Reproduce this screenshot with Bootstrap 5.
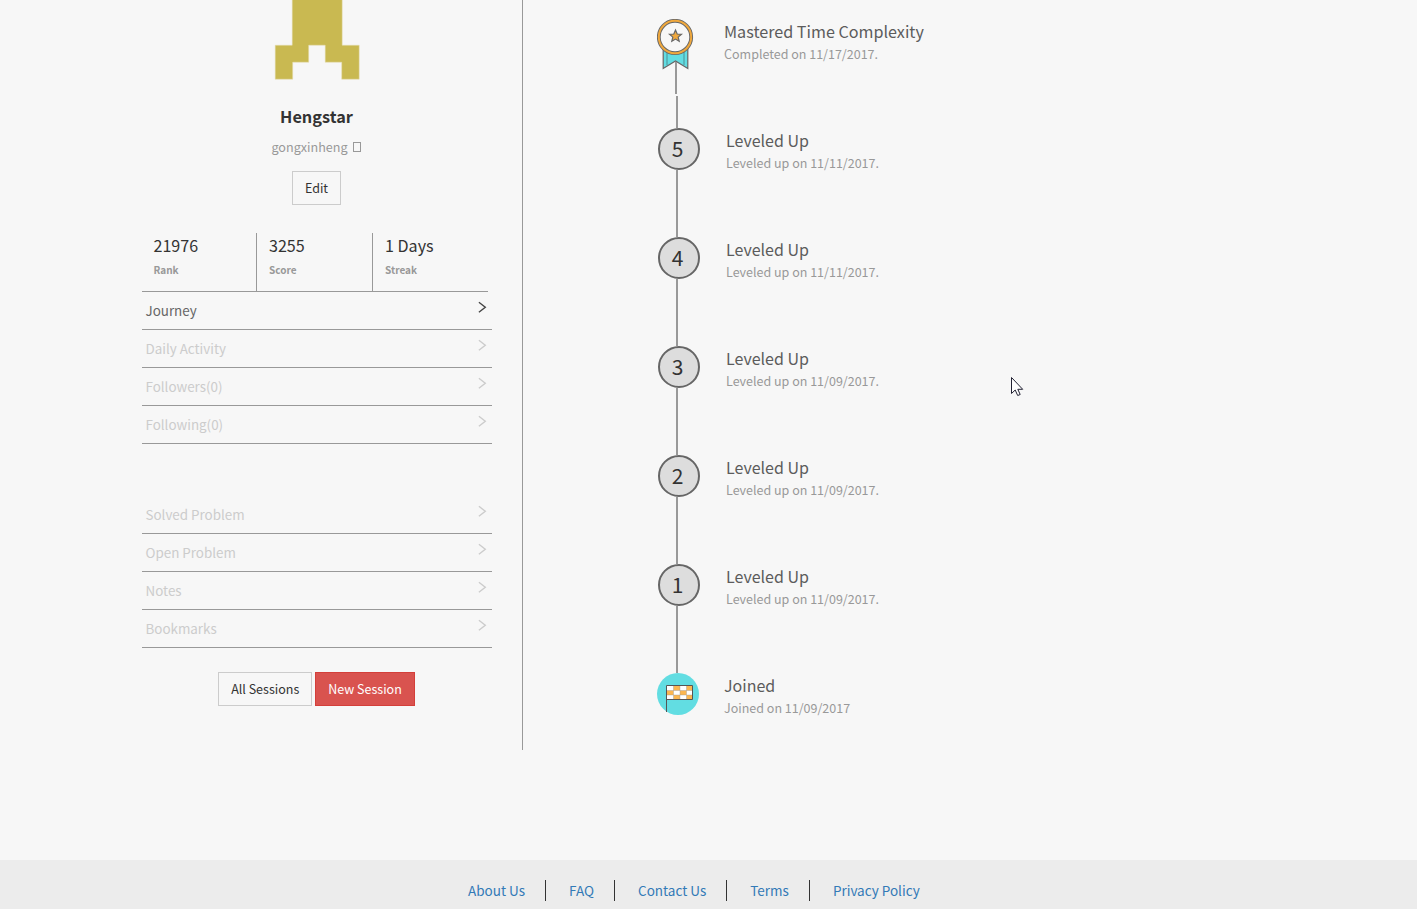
<!DOCTYPE html>
<html lang="en">
<head>
<meta charset="utf-8">
<title>Profile</title>
<link href="https://cdn.jsdelivr.net/npm/bootstrap@5.3.0/dist/css/bootstrap.min.css" rel="stylesheet">
<script src="https://cdn.jsdelivr.net/npm/bootstrap@5.3.0/dist/js/bootstrap.bundle.min.js"></script>
<style>
body{background:#f7f7f7;color:#333;font:14px/20px "Noto Sans CJK SC",sans-serif;height:909px;overflow:hidden}
a{text-decoration:none}
.profile{width:523px;height:750px;padding-left:142px;border-right:1px solid #999}
.profile-in{width:350px}
.avatar{display:block;margin:0 auto}
.user-name{font-size:16.3px;font-weight:700;line-height:24px;margin-top:24px;padding-right:1px}
.user-id{font-size:12.6px;color:#999;margin-top:9px;padding-right:2px}
.tofu{display:inline-block;width:8px;height:10px;border:1px solid #999;margin-left:5px}
.btn{--bs-btn-font-size:12.5px;--bs-btn-line-height:20px;--bs-btn-padding-x:12px;--bs-btn-padding-y:6px;--bs-btn-border-radius:0;--bs-btn-color:#333;--bs-btn-border-color:#ccc}
.btn-edit{width:49px;margin-top:14px;margin-right:1px}
.btn-new{--bs-btn-bg:#d9534f;--bs-btn-border-color:#d43f3a;--bs-btn-color:#fff}
.sessions{margin-top:24px;gap:3px;padding-right:1px}
.stats{width:346px;height:59px;margin-top:28px;border-bottom:1px solid #999}
.stat{width:114px;padding-left:11.500px}
.stat+.stat{width:116px;border-left:1px solid #999;padding-left:12px}
.stat-v{font-size:16.1px;line-height:24px}
.stat-l{font-size:10px;font-weight:700;color:#999;line-height:22px;margin-top:2px}
.menu a{height:38px;border-bottom:1px solid #999;color:#ccc;font-size:13.4px;padding:8px 5px 0 3.500px}
.menu a.on{color:#666}
.menu svg{margin-top:1px}
.menu a.on svg{color:#444}
.menu-2{margin-top:52px}
.timeline{padding:19px 0 0 134px}
.step{height:109px}
.mark-col{width:67px}
.mark-col svg{display:block}
.ring{width:42px;height:42px;margin-left:1px;border:2px solid #666;border-radius:50%;background:#ddd;color:#333;font-size:21px;line-height:36px;padding-right:3px}
.link-line{width:2px;height:67px;margin-left:19px;background:#999}
.step-t{font-size:16px;line-height:24px;color:#5c5c5c}
.step-t.topic{font-size:16.15px}
.step-d{font-size:12.5px;line-height:20px;color:#999;margin-top:1px}
.shift{padding-left:2px}
.foot{height:49px;margin-top:110px;background:#ececec;padding:20px 0 0 468px}
.foot a{color:#337ab7;font-size:13.5px;line-height:20px;margin-right:20px}
.foot i{width:1px;height:21px;background:#333;margin-right:23px}
.pointer{position:absolute;left:1010px;top:376px}
</style>
</head>
<body>
<svg class="d-none"><symbol id="chev" viewBox="0 0 9 12"><path d="M.9 1.300L7.300 6.300L.9 11.300" fill="none" stroke="currentColor" stroke-width="1.400"/></symbol></svg>
<div class="d-flex">
<aside class="profile"><div class="profile-in">
<svg class="avatar" width="86" height="80"><path d="M18 -2h50v47h17v34H67.500V62H51V45H34.500V62H18.500v17H1V45h17z" transform="translate(.2 .2)" fill="#c9b951" stroke="#e6dfb4" stroke-width=".5"/></svg>
<div class="text-center">
<div class="user-name">Hengstar</div>
<div class="user-id">gongxinheng<span class="tofu"></span></div>
<button class="btn btn-edit px-0">Edit</button>
</div>
<div class="stats d-flex">
<div class="stat"><div class="stat-v">21976</div><div class="stat-l">Rank</div></div>
<div class="stat"><div class="stat-v">3255</div><div class="stat-l">Score</div></div>
<div class="stat"><div class="stat-v">1 Days</div><div class="stat-l">Streak</div></div>
</div>
<nav class="menu">
<a href="#" class="on d-flex justify-content-between">Journey<svg width="9" height="12"><use href="#chev"/></svg></a>
<a href="#" class="d-flex justify-content-between">Daily Activity<svg width="9" height="12"><use href="#chev"/></svg></a>
<a href="#" class="d-flex justify-content-between">Followers(0)<svg width="9" height="12"><use href="#chev"/></svg></a>
<a href="#" class="d-flex justify-content-between">Following(0)<svg width="9" height="12"><use href="#chev"/></svg></a>
</nav>
<nav class="menu menu-2">
<a href="#" class="d-flex justify-content-between">Solved Problem<svg width="9" height="12"><use href="#chev"/></svg></a>
<a href="#" class="d-flex justify-content-between">Open Problem<svg width="9" height="12"><use href="#chev"/></svg></a>
<a href="#" class="d-flex justify-content-between">Notes<svg width="9" height="12"><use href="#chev"/></svg></a>
<a href="#" class="d-flex justify-content-between">Bookmarks<svg width="9" height="12"><use href="#chev"/></svg></a>
</nav>
<div class="sessions d-flex justify-content-center"><button class="btn">All Sessions</button><button class="btn btn-new">New Session</button></div>
</div></aside>
<main class="timeline">
<div class="step d-flex"><div class="mark-col">
<svg width="42" height="109">
<path d="M6.200 28h24.600v21.500l-12.300-7.500L6.200 49.500z" fill="#62dde2" stroke="#666" stroke-width="1.200"/>
<path d="M10 30v16M27 30v16" stroke="#4c8f94"/>
<path d="M18 43h2v32h-2zM19 77h2v32h-2z" fill="#999"/>
<circle cx="18" cy="18" r="16.200" fill="#f7f7f7" stroke="#666" stroke-width="3.800"/>
<circle cx="18" cy="18" r="16.200" fill="none" stroke="#f0a83c" stroke-width="2"/>
<path d="M18.500 11l1.700 4 4.300.3-3.300 2.800 1 4.200-3.700-2.200-3.700 2.200 1-4.200-3.300-2.800 4.300-.3z" fill="#f0a83c" stroke="#666" stroke-width="1.200"/>
</svg></div>
<div><div class="step-t topic">Mastered Time Complexity</div><div class="step-d">Completed on 11/17/2017.</div></div></div>
<div class="step d-flex"><div class="mark-col"><div class="ring text-center">5</div><div class="link-line"></div></div><div class="shift"><div class="step-t">Leveled Up</div><div class="step-d">Leveled up on 11/11/2017.</div></div></div>
<div class="step d-flex"><div class="mark-col"><div class="ring text-center">4</div><div class="link-line"></div></div><div class="shift"><div class="step-t">Leveled Up</div><div class="step-d">Leveled up on 11/11/2017.</div></div></div>
<div class="step d-flex"><div class="mark-col"><div class="ring text-center">3</div><div class="link-line"></div></div><div class="shift"><div class="step-t">Leveled Up</div><div class="step-d">Leveled up on 11/09/2017.</div></div></div>
<div class="step d-flex"><div class="mark-col"><div class="ring text-center">2</div><div class="link-line"></div></div><div class="shift"><div class="step-t">Leveled Up</div><div class="step-d">Leveled up on 11/09/2017.</div></div></div>
<div class="step d-flex"><div class="mark-col"><div class="ring text-center">1</div><div class="link-line"></div></div><div class="shift"><div class="step-t">Leveled Up</div><div class="step-d">Leveled up on 11/09/2017.</div></div></div>
<div class="d-flex"><div class="mark-col">
<svg width="42" height="42"><circle cx="21" cy="21" r="21" fill="#62dde2"/><path d="M9.500 12.500h26v14h-26z" fill="#fff"/>
<path d="M16.500 13h6.500v4.500h-6.500zM29.500 13h6v4.500h-6zM10 17.500h6.500v4.500H10zM23 17.500h6.500v4.500H23zM16.500 22h6.500v4.500h-6.500zM29.500 22h6v4.500h-6z" fill="#fbb650"/>
<path d="M10 17.500h25M10 22h25M16.500 13v13M23 13v13M29.500 13v13" stroke="#999" stroke-width=".4"/>
<path d="M9.500 39V12.500h26v14h-26" fill="none" stroke="#555"/></svg></div>
<div><div class="step-t">Joined</div><div class="step-d">Joined on 11/09/2017</div></div></div>
</main>
</div>
<footer class="foot d-flex"><a href="#">About Us</a><i></i><a href="#">FAQ</a><i></i><a href="#">Contact Us</a><i></i><a href="#">Terms</a><i></i><a href="#">Privacy Policy</a></footer>
<svg class="pointer" width="16" height="22"><path d="M1.500 1.500v16l3.700-3.500 2.500 5.500 2.500-1-2.400-5.200h4.900z" fill="#fff" stroke="#223" stroke-width="1"/></svg>
</body>
</html>
